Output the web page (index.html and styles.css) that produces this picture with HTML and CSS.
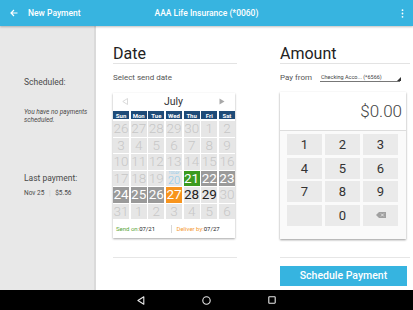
FILE: index.html
```html
<!DOCTYPE html>
<html>
<head>
<meta charset="utf-8">
<link rel="stylesheet" href="styles.css">
</head>
<body>
<div class="screen">
  <header class="appbar">
    <svg class="back" width="8" height="8" viewBox="0 0 8 8"><path d="M7.5 4H1.2M4 1L1 4l3 3" fill="none" stroke="#fff" stroke-width="1.2"/></svg>
    <span class="title">New Payment</span>
    <span class="payee">AAA Life Insurance (*0060)</span>
    <svg class="more" width="3" height="9" viewBox="0 0 3 9"><circle cx="1.5" cy="1.2" r="0.9" fill="#fff"/><circle cx="1.5" cy="4.5" r="0.9" fill="#fff"/><circle cx="1.5" cy="7.8" r="0.9" fill="#fff"/></svg>
  </header>
  <div class="content">
    <aside class="side">
      <div class="side-label first">Scheduled:</div>
      <div class="side-note">You have no payments<br>scheduled.</div>
      <div class="side-label second">Last payment:</div>
      <div class="side-last">Nov 25 <span class="sep">|</span> $5.56</div>
    </aside>
    <main class="main">
      <section class="col date-col">
        <h2 class="heading">Date</h2>
        <div class="sub">Select send date</div>
        <div class="calendar">
          <div class="month">
            <svg width="6" height="7" viewBox="0 0 6 7"><path d="M5.5 0.5L0.8 3.5l4.7 3z" fill="none" stroke="#d0d0d0" stroke-width="0.8"/></svg>
            <span>July</span>
            <svg width="6" height="7" viewBox="0 0 6 7"><path d="M0.5 0.5l5 3-5 3z" fill="#a8a8a8"/></svg>
          </div>
          <div class="grid">
            <div class="dh">Sun</div><div class="dh">Mon</div><div class="dh">Tue</div><div class="dh">Wed</div><div class="dh">Thu</div><div class="dh">Fri</div><div class="dh">Sat</div>
            <div class="d">26</div><div class="d">27</div><div class="d">28</div><div class="d">29</div><div class="d">30</div><div class="d">1</div><div class="d">2</div>
            <div class="d">3</div><div class="d">4</div><div class="d">5</div><div class="d">6</div><div class="d">7</div><div class="d">8</div><div class="d">9</div>
            <div class="d">10</div><div class="d">11</div><div class="d">12</div><div class="d">13</div><div class="d">14</div><div class="d">15</div><div class="d">16</div>
            <div class="d">17</div><div class="d">18</div><div class="d">19</div><div class="d today"><span class="tlabel">TODAY</span><span class="tnum">20</span></div><div class="d send">21</div><div class="d gray">22</div><div class="d gray">23</div>
            <div class="d gray">24</div><div class="d gray">25</div><div class="d gray">26</div><div class="d deliver">27</div><div class="d open">28</div><div class="d open">29</div><div class="d">30</div>
            <div class="d">31</div><div class="d">1</div><div class="d">2</div><div class="d">3</div><div class="d">4</div><div class="d">5</div><div class="d">6</div>
          </div>
          <div class="cal-foot">
            <span class="foot-item"><span class="green">Send on:</span>07/21</span>
            <span class="foot-sep"></span>
            <span class="foot-item"><span class="orange">Deliver by:</span>07/27</span>
          </div>
        </div>
        <div class="rule"></div>
      </section>
      <section class="col amount-col">
        <h2 class="heading">Amount</h2>
        <div class="payfrom">
          <span class="pf-label">Pay from</span>
          <span class="select">Checking Acco... (*6566)<svg class="corner" width="4" height="4" viewBox="0 0 4 4"><path d="M4 0V4H0z" fill="#333"/></svg></span>
        </div>
        <div class="pad">
          <div class="display">$0.00</div>
          <div class="keys">
            <div class="key">1</div><div class="key">2</div><div class="key">3</div>
            <div class="key">4</div><div class="key">5</div><div class="key">6</div>
            <div class="key">7</div><div class="key">8</div><div class="key">9</div>
            <div class="key"></div><div class="key">0</div>
            <div class="key"><svg width="10" height="6" viewBox="0 0 10 6"><path d="M3 0H10V6H3L0 3z" fill="#a0a0a0"/><path d="M5 1.6l2.8 2.8M7.8 1.6L5 4.4" stroke="#ececec" stroke-width="0.8"/></svg></div>
          </div>
        </div>
        <div class="rule"></div>
        <button class="schedule">Schedule Payment</button>
      </section>
    </main>
  </div>
  <nav class="navbar">
    <svg width="8" height="9" viewBox="0 0 8 9"><path d="M6.8 0.8v7.4L0.9 4.5z" fill="none" stroke="#e8e8e8" stroke-width="1.1" stroke-linejoin="round"/></svg>
    <svg width="9" height="9" viewBox="0 0 9 9"><circle cx="4.5" cy="4.5" r="3.7" fill="none" stroke="#e8e8e8" stroke-width="1.1"/></svg>
    <svg width="8" height="8" viewBox="0 0 8 8"><rect x="0.8" y="0.8" width="6.4" height="6.4" rx="0.6" fill="none" stroke="#e8e8e8" stroke-width="1.1"/></svg>
  </nav>
</div>
</body>
</html>
```
FILE: styles.css
```css
* { box-sizing: border-box; }
html, body { margin: 0; padding: 0; }
body { width: 413px; height: 310px; overflow: hidden; font-family: Roboto, "Liberation Sans", sans-serif; background: #fff; }
.screen { width: 413px; height: 310px; display: flex; flex-direction: column; }

.appbar { height: 26px; flex: none; background: #37b4e0; display: flex; align-items: center; position: relative; z-index: 2; box-shadow: 0 1px 2px rgba(0,0,0,0.25); color: #fff; }
.back { margin-left: 10px; }
.title { margin-left: 10px; font-size: 8.5px; font-weight: 500; }
.payee { position: absolute; left: 0; right: 0; text-align: center; font-size: 8.5px; font-weight: 500; pointer-events: none; }
.more { margin-left: auto; margin-right: 9px; }

.content { flex: 1; display: flex; min-height: 0; }
.side { width: 96px; flex: none; background: #e8e8e8; border-right: 2px solid #dadada; padding-left: 24px; display: flex; flex-direction: column; }
.side-label { font-size: 8.5px; line-height: 12px; color: #4a4a4a; }
.side-label.first { margin-top: 50px; }
.side-label.second { margin-top: 48px; }
.side-note { margin-top: 20px; font-size: 6.5px; line-height: 8px; font-style: italic; color: #4a4a4a; }
.side-last { margin-top: 5px; font-size: 6.5px; line-height: 8px; color: #4a4a4a; }
.sep { color: #c8c8c8; margin: 0 3px; }

.main { flex: 1; display: flex; gap: 43px; padding-left: 17px; }
.col { display: flex; flex-direction: column; }
.date-col { width: 124px; }
.amount-col { width: 130px; }
.heading { margin: 20px 0 0; font-size: 16px; line-height: 16px; font-weight: 400; color: #222; padding-bottom: 1px; border-bottom: 1px solid #e3e3e3; }
.sub { margin-top: 9px; font-size: 8px; line-height: 10px; color: #555; }

.calendar { margin-top: 10px; width: 122px; background: #fff; box-shadow: 0 1px 2px rgba(0,0,0,0.35); }
.month { height: 17px; display: flex; align-items: center; justify-content: space-between; padding: 0 10px 0 9px; font-size: 10.5px; color: #333; }
.grid { display: grid; grid-template-columns: repeat(7, 1fr); grid-template-rows: 9px repeat(6, 15.5px); gap: 1px 1.5px; padding-top: 1px; }
.dh { background: #1e4b78; color: #fff; font-size: 6px; font-weight: 700; display: flex; align-items: center; justify-content: center; margin-bottom: 1px; }
.d { background: #e6e6e6; color: #c6c6c6; font-size: 13.5px; font-weight: 300; display: flex; align-items: center; justify-content: center; line-height: 1; }
.d.today { flex-direction: column; justify-content: flex-start; color: #8fcbec; }
.tlabel { display: block; height: 4px; font-size: 3.5px; line-height: 4px; color: #8fcbec; font-weight: 400; margin-top: 0.5px; }
.tnum { display: block; font-size: 11px; line-height: 11px; }
.d.send { background: #3b9a1f; color: #fff; font-weight: 400; }
.d.gray { background: #9a9a9a; color: #fff; font-weight: 400; }
.d.deliver { background: #f7941d; color: #fff; font-weight: 400; }
.d.open { color: #222; font-weight: 400; }
.cal-foot { height: 19px; display: flex; align-items: center; padding: 0 4px 0 3px; font-size: 6px; color: #222; }
.foot-item { flex: 1; }
.foot-sep { width: 1px; height: 8px; background: #d8d8d8; margin: 0 5px 0 0; }
.green { color: #5aa53a; }
.orange { color: #f59a35; }
.rule { height: 1px; background: #e6e6e6; margin-top: 19px; }

.payfrom { margin-top: 8px; display: flex; align-items: center; height: 11px; }
.pf-label { font-size: 8px; color: #555; width: 40px; }
.select { position: relative; width: 80px; font-size: 5.5px; color: #444; border-bottom: 1px solid #777; line-height: 8px; padding-left: 1px; }
.corner { position: absolute; right: -1px; bottom: 0; }

.pad { margin-top: 9px; width: 126px; background: #fafafa; box-shadow: 0 1px 2px rgba(0,0,0,0.4); }
.display { height: 39px; background: #fff; border-bottom: 1px solid #ddd; display: flex; align-items: center; justify-content: flex-end; padding-right: 4px; font-size: 17px; font-weight: 300; color: #444; }
.keys { display: grid; grid-template-columns: repeat(3, 35px); grid-template-rows: repeat(4, 21px); gap: 2.5px 3px; padding: 3px 8px 13px 7px; }
.key { background: #eaeaea; display: flex; align-items: center; justify-content: center; font-size: 13px; color: #333; }
.amount-col .rule { margin-top: 18px; }
.schedule { margin-top: 8px; width: 127px; height: 20px; border: 0; background: #36b4e0; color: #fff; font-family: Roboto, "Liberation Sans", sans-serif; font-size: 10.5px; font-weight: 500; padding: 0; }

.navbar { height: 20px; flex: none; background: #000; display: flex; align-items: center; justify-content: center; gap: 57px; }
```
